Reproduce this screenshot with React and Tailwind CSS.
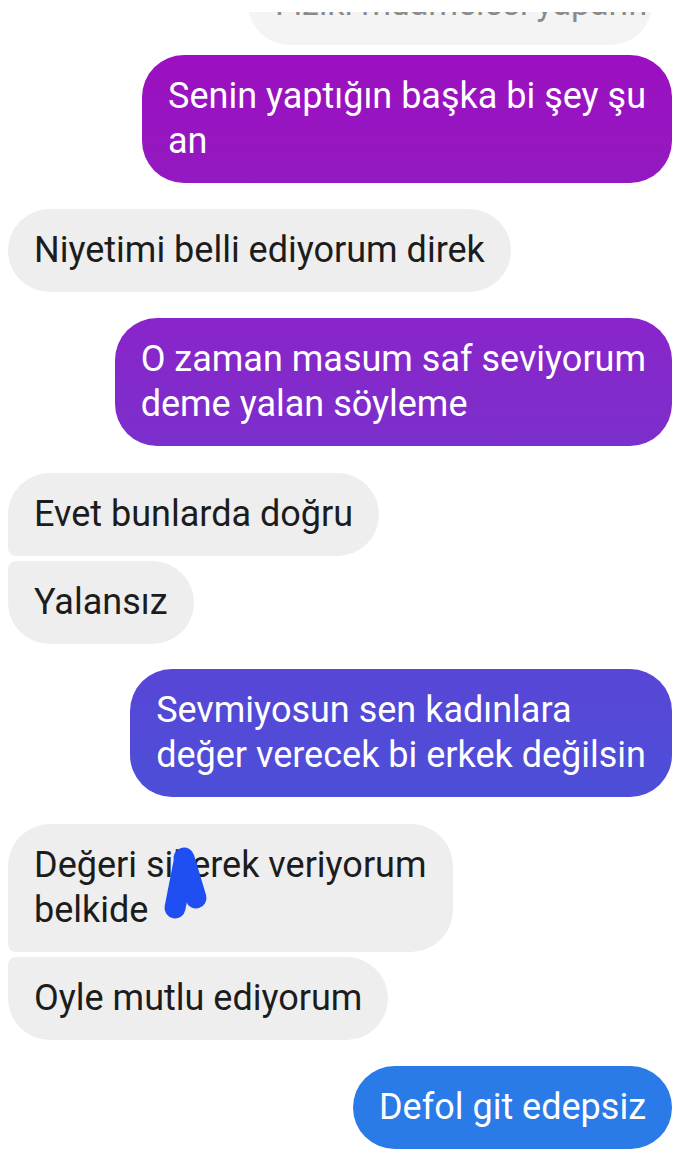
import React from 'react';

const font = { fontFamily: 'Roboto, "Noto Sans", sans-serif' };

// grey incoming bubble, corner classes passed in for grouped messages
const Incoming = ({ children, corners = 'rounded-[42px]', extra = null }) => (
  <div className="flex justify-start">
    <div className={`relative w-fit bg-[#eeeeee] text-[#1c1c1c] px-[26px] py-[19px] ${corners}`}>
      {children}
      {extra}
    </div>
  </div>
);

const Outgoing = ({ children, color }) => (
  <div className="flex justify-end">
    <div className={`w-fit text-white px-[26px] py-[19px] rounded-[42px] ${color}`}>
      {children}
    </div>
  </div>
);

// blue marker scribble drawn over one word
const Scribble = () => (
  <svg className="absolute left-[152px] top-[20px] w-[60px] h-[80px]" viewBox="0 0 60 80">
    <g stroke="#1f4ff2" strokeWidth="21" strokeLinecap="round" strokeLinejoin="round" fill="none">
      <path d="M24 14 L36 54" />
      <path d="M24 18 L15 64" />
    </g>
  </svg>
);

export default function App() {
  return (
    <div className="w-[690px] h-[1150px] bg-white overflow-hidden text-[36px] leading-[45px]" style={font}>
      <div className="pl-[8px] pr-[18px]">
        {/* previous message, cut off at top */}
        <div className="mt-[12px] h-[33px] overflow-hidden flex items-end justify-end">
          <div className="w-[404px] overflow-hidden bg-[#f4f4f4] text-[#8a8a8a] px-[27px] py-[19px] rounded-[42px] mr-[20px] whitespace-nowrap text-[34px]">
            Fiziki muamelesi yaparım
          </div>
        </div>

        <div className="mt-[10px]">
          <Outgoing color="bg-gradient-to-b from-[#9c0fc0] to-[#9319c1]">
            Senin yaptığın başka bi şey şu<br />an
          </Outgoing>
        </div>

        <div className="mt-[26px]">
          <Incoming>Niyetimi belli ediyorum direk</Incoming>
        </div>

        <div className="mt-[26px]">
          <Outgoing color="bg-gradient-to-b from-[#8a24ca] to-[#7b2fcc]">
            O zaman masum saf seviyorum<br />deme yalan söyleme
          </Outgoing>
        </div>

        <div className="mt-[27px] flex flex-col gap-[5px]">
          <Incoming corners="rounded-[42px] rounded-bl-[8px]">Evet bunlarda doğru</Incoming>
          <Incoming corners="rounded-[42px] rounded-tl-[8px]">Yalansız</Incoming>
        </div>

        <div className="mt-[25px]">
          <Outgoing color="bg-gradient-to-b from-[#5846d6] to-[#4c4fd8]">
            Sevmiyosun sen kadınlara<br />değer verecek bi erkek değilsin
          </Outgoing>
        </div>

        <div className="mt-[27px] flex flex-col gap-[5px]">
          <Incoming corners="rounded-[42px] rounded-bl-[8px]" extra={<Scribble />}>
            Değeri sikerek veriyorum<br />belkide
          </Incoming>
          <Incoming corners="rounded-[42px] rounded-tl-[8px]">Oyle mutlu ediyorum</Incoming>
        </div>

        <div className="mt-[26px]">
          <Outgoing color="bg-[#2a7ae8]">Defol git edepsiz</Outgoing>
        </div>
      </div>
    </div>
  );
}
